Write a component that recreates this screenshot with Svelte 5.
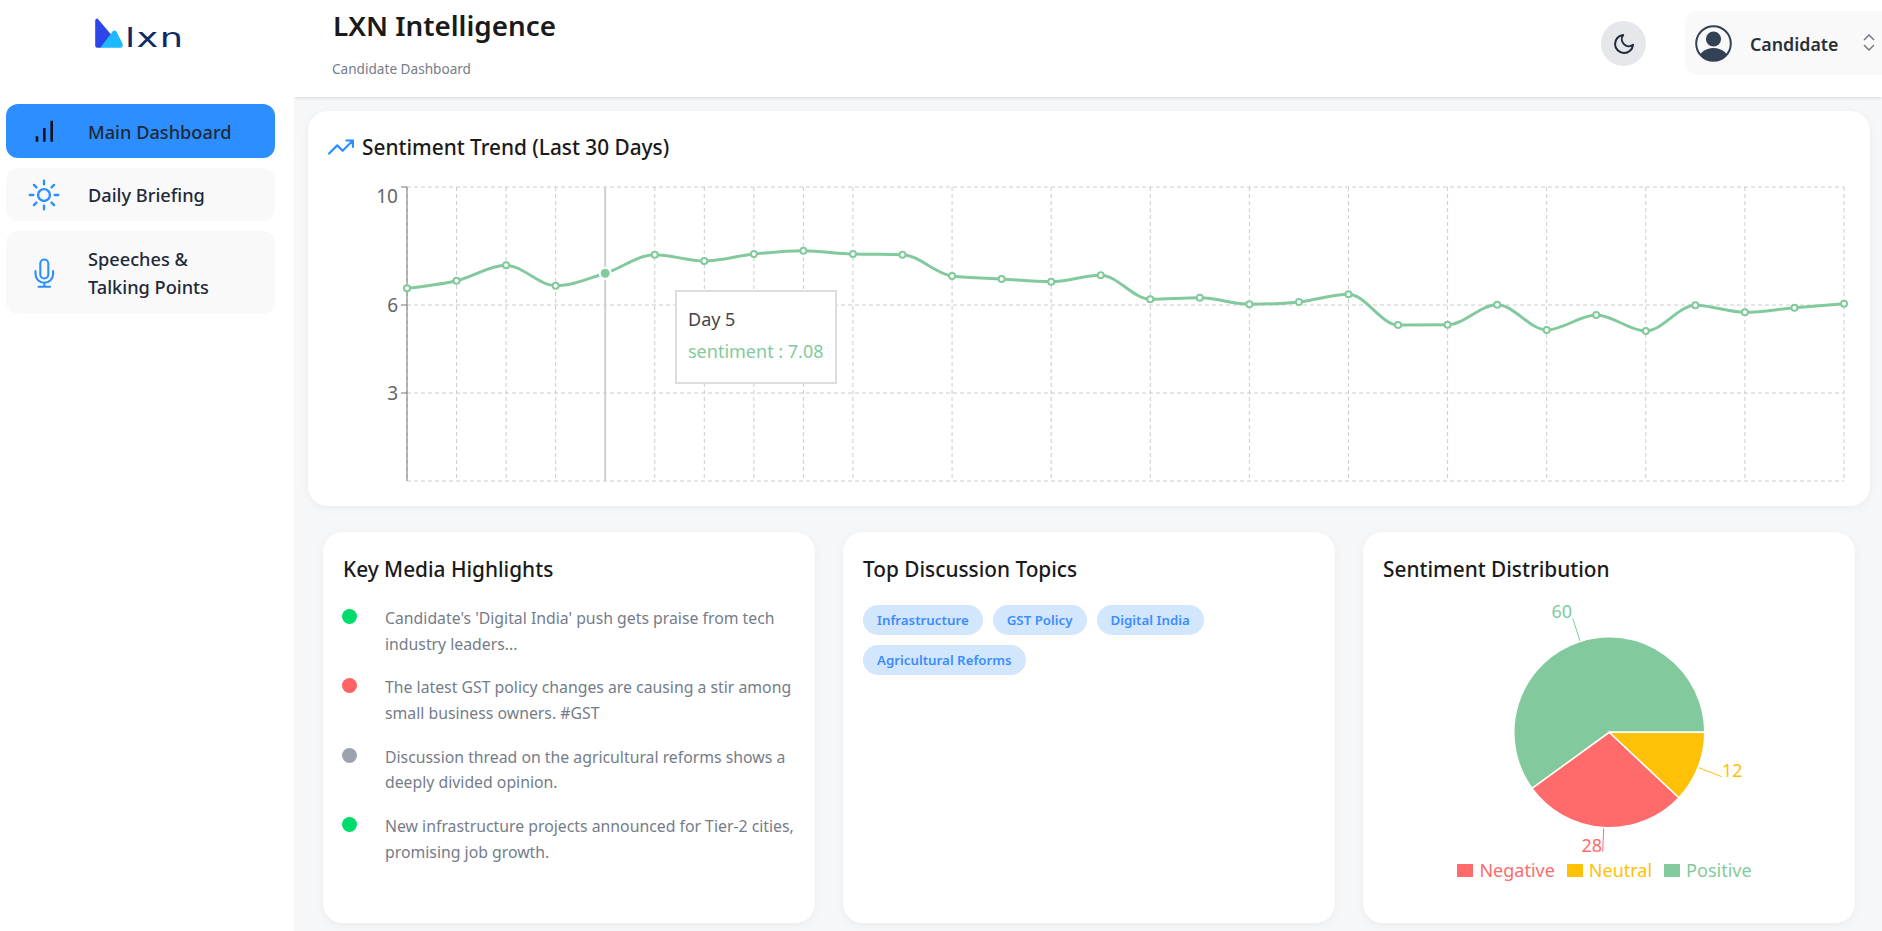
<script>
  const nav = [
    { id: 'dash', label: 'Main Dashboard', active: true },
    { id: 'sun', label: 'Daily Briefing' },
    { id: 'mic', label: 'Speeches & Talking Points' }
  ];
  const highlights = [
    { tone: 'pos', text: "Candidate's 'Digital India' push gets praise from tech industry leaders..." },
    { tone: 'neg', text: 'The latest GST policy changes are causing a stir among small business owners. #GST' },
    { tone: 'neu', text: 'Discussion thread on the agricultural reforms shows a deeply divided opinion.' },
    { tone: 'pos', text: 'New infrastructure projects announced for Tier-2 cities, promising job growth.' }
  ];
  const topics = ['Infrastructure', 'GST Policy', 'Digital India', 'Agricultural Reforms'];
  const legend = [
    { label: 'Negative', color: '#ff6b6b' },
    { label: 'Neutral', color: '#ffc107' },
    { label: 'Positive', color: '#82ca9d' }
  ];

  // chart geometry, local to the svg
  const L = 79, R = 1516, T = 7, B = 301;
  const pxY = [288.3,280.7,265.3,285.7,273.3,254.7,261,254,250.7,254,254.7,276,279,281.7,275.3,299.3,297.7,304.3,302,294.3,325,324.7,304.7,330,315,331,305.3,312.3,307.7,303.7];
  const pts = pxY.map((y, i) => [L + (i * (R - L)) / 29, y - 180]);
  const hover = 4;

  function slope3(x0, y0, x1, y1, x2, y2) {
    const h0 = x1 - x0, h1 = x2 - x1;
    const s0 = (y1 - y0) / h0, s1 = (y2 - y1) / h1;
    const p = (s0 * h1 + s1 * h0) / (h0 + h1);
    return (Math.sign(s0) + Math.sign(s1)) * Math.min(Math.abs(s0), Math.abs(s1), 0.5 * Math.abs(p)) || 0;
  }
  function monotone(p) {
    const n = p.length;
    const t = p.map((q, i) => {
      if (i === 0 || i === n - 1) return null;
      return slope3(p[i - 1][0], p[i - 1][1], q[0], q[1], p[i + 1][0], p[i + 1][1]);
    });
    const h0 = p[1][0] - p[0][0];
    t[0] = (3 * (p[1][1] - p[0][1]) / h0 - t[1]) / 2;
    const hn = p[n - 1][0] - p[n - 2][0];
    t[n - 1] = (3 * (p[n - 1][1] - p[n - 2][1]) / hn - t[n - 2]) / 2;
    let d = `M${p[0][0]},${p[0][1]}`;
    for (let i = 0; i < n - 1; i++) {
      const dx = (p[i + 1][0] - p[i][0]) / 3;
      d += `C${p[i][0] + dx},${p[i][1] + dx * t[i]} ${p[i + 1][0] - dx},${p[i + 1][1] - dx * t[i + 1]} ${p[i + 1][0]},${p[i + 1][1]}`;
    }
    return d;
  }
  const linePath = monotone(pts);
  const vLines = pts.map((q, i) => ({ x: q[0], i })).filter((v) => v.i <= 9 || v.i % 2 === 1).map((v) => v.x);
  const hLines = [7, 125, 213, 301];
  const ticks = [
    { y: 7, label: '10', ty: 23 },
    { y: 125, label: '6', ty: 132 },
    { y: 213, label: '3', ty: 220 }
  ];

  // pie geometry, local to the svg
  const cx = 226.3, cy = 142.3, r = 95.5;
  const pol = (deg, rad = r) => [cx + rad * Math.cos((deg * Math.PI) / 180), cy - rad * Math.sin((deg * Math.PI) / 180)];
  function sector(a0, a1) {
    const [x0, y0] = pol(a0);
    const [x1, y1] = pol(a1);
    const large = a1 - a0 > 180 ? 1 : 0;
    return `M${cx},${cy}L${x0},${y0}A${r},${r} 0 ${large} 0 ${x1},${y1}Z`;
  }
  const slices = [
    { d: sector(0, 216), color: '#82ca9d' },
    { d: sector(216, 316.8), color: '#ff6b6b' },
    { d: sector(316.8, 360), color: '#ffc107' }
  ];
</script>

<div class="shell">
  <aside class="side">
    <div class="logo">
      <svg width="30" height="32" viewBox="0 0 30 32" aria-hidden="true">
        <path d="M0.2 3C0.2 .8 2 -.2 3.4 1.4L19 20L6 29.7H2.2C1 29.7 .2 28.9 .2 27.7Z" fill="#2d46e8" />
        <path d="M5.2 29.7L17.6 13.6C18.8 12.2 20.6 12.2 21.6 13.8L27.4 25.4C28.4 27.8 27.4 29.7 25 29.7Z" fill="#1eb8ff" />
      </svg>
      <span class="word">lxn</span>
    </div>
    <nav class="nav">
      {#each nav as item}
        <div class="nav-item" class:active={item.active}>
          <span class="nav-icon">
            {#if item.id === 'dash'}
              <svg width="38" height="38" viewBox="0 0 38 38" fill="none" stroke="#0b1220" stroke-width="2.6" aria-hidden="true">
                <path d="M12 29.7V24.3M19.3 29.7V16M26.7 29.7V8.7" />
              </svg>
            {:else if item.id === 'sun'}
              <svg width="38" height="38" viewBox="0 0 24 24" fill="none" stroke="#2d8fff" stroke-width="1.5" stroke-linecap="round" aria-hidden="true">
                <path d="M12 3v2.25m6.364.386-1.591 1.591M21 12h-2.25m-.386 6.364-1.591-1.591M12 18.75V21m-4.773-4.227-1.591 1.591M5.25 12H3m4.227-4.773L5.636 5.636M15.75 12a3.75 3.75 0 1 1-7.5 0 3.75 3.75 0 0 1 7.5 0Z" />
              </svg>
            {:else}
              <svg width="24" height="32" viewBox="0 0 24 32" fill="none" stroke="#2d8fff" stroke-width="2.1" stroke-linecap="round" aria-hidden="true">
                <rect x="8.3" y="2.5" width="8" height="19" rx="4" />
                <path d="M3.5 14v3a8.8 8.8 0 0 0 17.6 0v-3M12.3 26v3.7M6.5 29.7h11.6" />
              </svg>
            {/if}
          </span>
          <span class="nav-label">{item.label}</span>
        </div>
      {/each}
    </nav>
  </aside>

  <div class="main">
    <header class="top">
      <div class="titles">
        <h1>LXN Intelligence</h1>
        <p>Candidate Dashboard</p>
      </div>
      <div class="top-right">
        <button class="theme" aria-label="Toggle theme">
          <svg width="24" height="24" viewBox="0 0 24 24" fill="none" stroke="#1f2937" stroke-width="2" stroke-linecap="round" stroke-linejoin="round" aria-hidden="true">
            <path d="M21 12.79A9 9 0 1 1 11.21 3 7 7 0 0 0 21 12.79z" />
          </svg>
        </button>
        <div class="user">
          <svg width="37" height="37" viewBox="0 0 37 37" aria-hidden="true">
            <defs><clipPath id="av"><circle cx="18.5" cy="18.5" r="17.5" /></clipPath></defs>
            <circle cx="18.5" cy="18.5" r="17.3" fill="none" stroke="#334155" stroke-width="2" />
            <circle cx="18.5" cy="14" r="7.6" fill="#334155" />
            <ellipse cx="18.5" cy="36" rx="15.5" ry="13" fill="#334155" clip-path="url(#av)" />
          </svg>
          <span class="user-name">Candidate</span>
          <svg class="chev" width="12" height="18" viewBox="0 0 12 18" fill="none" stroke="#6b7280" stroke-width="1.4" aria-hidden="true">
            <path d="M1 6l5-5 5 5M1 11l5 5 5-5" />
          </svg>
        </div>
      </div>
    </header>

    <main class="content">
      <section class="card trend">
        <div class="trend-head">
          <svg width="26" height="26" viewBox="0 0 24 24" fill="none" stroke="#2d8fff" stroke-width="2" stroke-linecap="round" stroke-linejoin="round" aria-hidden="true">
            <path d="M23 6l-9.5 9.5-5-5L1 18M17 6h6v6" />
          </svg>
          <h2>Sentiment Trend (Last 30 Days)</h2>
        </div>
        <div class="chart">
          <svg width="1522" height="306" viewBox="0 0 1522 306" aria-hidden="true">
            <g stroke="#ccc" stroke-dasharray="4 3" fill="none">
              {#each hLines as y}<line x1={L} x2={R} y1={y} y2={y} />{/each}
              {#each vLines as x}<line x1={x} x2={x} y1={T} y2={B} />{/each}
            </g>
            <line x1={L} x2={L} y1={T} y2={B} stroke="#777" />
            {#each ticks as t}
              <line x1={L - 6} x2={L} y1={t.y} y2={t.y} stroke="#777" />
              <text x={L - 9} y={t.ty} text-anchor="end" class="tick">{t.label}</text>
            {/each}
            <line x1={pts[hover][0]} x2={pts[hover][0]} y1={T} y2={B} stroke="#d0d0d0" stroke-width="2" />
            <path d={linePath} fill="none" stroke="#82ca9d" stroke-width="3" />
            {#each pts as p, i}
              {#if i === hover}
                <circle cx={p[0]} cy={p[1]} r="5.5" fill="#82ca9d" stroke="#fff" stroke-width="2" />
              {:else}
                <circle cx={p[0]} cy={p[1]} r="3" fill="#fff" stroke="#82ca9d" stroke-width="2" />
              {/if}
            {/each}
          </svg>
          <div class="tip">
            <div class="tip-label">Day 5</div>
            <div class="tip-value">sentiment : 7.08</div>
          </div>
        </div>
      </section>

      <div class="row">
        <section class="card panel">
          <h3>Key Media Highlights</h3>
          <ul class="list">
            {#each highlights as h}
              <li>
                <span class="dot {h.tone}"></span>
                <span class="li-text">{h.text}</span>
              </li>
            {/each}
          </ul>
        </section>

        <section class="card panel">
          <h3>Top Discussion Topics</h3>
          <div class="chips">
            {#each topics as t}<span class="chip">{t}</span>{/each}
          </div>
        </section>

        <section class="card panel">
          <h3>Sentiment Distribution</h3>
          <svg class="pie" width="452" height="268" viewBox="0 0 452 268" aria-hidden="true">
            {#each slices as s}
              <path d={s.d} fill={s.color} stroke="#fff" stroke-width="1.5" />
            {/each}
            <path d="M197 51L189.7 28.3" stroke="#82ca9d" fill="none" />
            <path d="M316 177.7L338.7 186.7" stroke="#ffc107" fill="none" />
            <path d="M220.7 238.3L219.7 261.7" stroke="#ff6b6b" fill="none" />
            <text x="189" y="28" text-anchor="end" fill="#82ca9d" class="plabel">60</text>
            <text x="339" y="187" fill="#ffc107" class="plabel">12</text>
            <text x="219" y="262" text-anchor="end" fill="#ff6b6b" class="plabel">28</text>
          </svg>
          <div class="legend">
            {#each legend as l}
              <span class="leg" style:color={l.color}>
                <span class="swatch" style:background={l.color}></span>{l.label}
              </span>
            {/each}
          </div>
        </section>
      </div>
    </main>
  </div>
</div>

<style>
  :global(body) {
    margin: 0;
    background: #f6f7f9;
    font-family: "Noto Sans", "Open Sans", sans-serif;
    overflow: hidden;
  }
  .shell {
    display: grid;
    grid-template-columns: 294px 1fr;
    height: 931px;
    overflow: hidden;
  }
  .side {
    background: #fff;
    padding: 18px 19px 0 6px;
  }
  .logo {
    display: flex;
    align-items: flex-start;
    gap: 0;
    height: 86px;
    padding-left: 89px;
  }
  .word {
    font-family: "DejaVu Sans", sans-serif;
    font-size: 27px;
    line-height: 39px;
    color: #0e2a66;
    letter-spacing: 1px;
    transform: scaleX(1.36);
    transform-origin: left center;
  }
  .nav {
    display: flex;
    flex-direction: column;
    gap: 10px;
  }
  .nav-item {
    display: flex;
    align-items: center;
    gap: 25px;
    min-height: 53px;
    padding-left: 19px;
    border-radius: 12px;
    background: #f9f9fa;
    box-sizing: border-box;
  }
  .nav-item.active {
    background: #2d8fff;
    min-height: 54px;
  }
  .nav-item:last-child {
    min-height: 83px;
  }
  .nav-icon {
    width: 38px;
    display: flex;
    justify-content: center;
    flex: none;
  }
  .nav-label {
    width: 140px;
    padding-top: 1px;
    font-size: 18.2px;
    font-weight: 500;
    line-height: 28px;
    color: #1f2937;
  }
  .nav-item.active .nav-label {
    white-space: nowrap;
  }
  .main {
    display: flex;
    flex-direction: column;
    min-width: 0;
  }
  .top {
    height: 97px;
    background: #fff;
    box-shadow: 0 1px 4px rgba(0, 0, 0, 0.12);
    clip-path: inset(0 0 -10px 0);
    display: flex;
    justify-content: space-between;
    padding-left: 39px;
    flex: none;
    position: relative;
  }
  h1 {
    margin: 3px 0 0;
    font-size: 27.8px;
    line-height: 44px;
    font-weight: 600;
    color: #1a1a1a;
  }
  .titles p {
    margin: 13px 0 0 -1px;
    font-size: 13.6px;
    line-height: 18px;
    color: #757c89;
  }
  .top-right {
    display: flex;
    align-items: flex-start;
    gap: 39px;
  }
  .theme {
    width: 45px;
    height: 45px;
    margin-top: 21px;
    border: none;
    border-radius: 50%;
    background: #e5e7eb;
    display: flex;
    align-items: center;
    justify-content: center;
    padding: 0;
  }
  .user {
    width: 197px;
    height: 64px;
    margin-top: 11px;
    border-radius: 12px 0 0 12px;
    background: #f9f9fa;
    display: flex;
    align-items: center;
    padding-left: 10px;
    box-sizing: border-box;
  }
  .user-name {
    margin-left: 18px;
    width: 113px;
    padding-top: 1px;
    font-size: 17.8px;
    font-weight: 600;
    color: #2b2f36;
  }
  .content {
    padding: 14px 12px 0 14px;
  }
  .card {
    background: #fff;
    border-radius: 20px;
    box-shadow: 0 2px 10px rgba(0, 0, 0, 0.05);
  }
  .trend {
    padding: 20px;
    height: 395px;
    box-sizing: border-box;
  }
  .trend-head {
    display: flex;
    align-items: center;
    gap: 8px;
    height: 32px;
    margin-bottom: 17px;
  }
  h2, h3 {
    margin: 0;
    font-size: 20.8px;
    font-weight: 500;
    color: #1a1a1a;
  }
  .chart {
    position: relative;
  }
  .chart svg {
    display: block;
  }
  .tick {
    font-size: 19px;
    fill: #666;
  }
  .tip {
    position: absolute;
    left: 347px;
    top: 110px;
    width: 162px;
    height: 94px;
    box-sizing: border-box;
    background: #fff;
    border: 2px solid #ddd;
    padding: 13px 11px;
    font-size: 18px;
    white-space: nowrap;
  }
  .tip-label {
    color: #444;
    line-height: 28px;
    margin-bottom: 4px;
  }
  .tip-value {
    color: #82ca9d;
    line-height: 28px;
  }
  .row {
    display: grid;
    grid-template-columns: repeat(3, 492px);
    gap: 28px;
    margin: 26px 0 0 15px;
  }
  .panel {
    height: 391px;
    padding: 20px;
    box-sizing: border-box;
  }
  h3 {
    line-height: 34px;
  }
  .list {
    list-style: none;
    margin: 20px 0 0;
    padding: 0;
  }
  .list li {
    display: flex;
    gap: 28px;
    margin-bottom: 18.2px;
    font-size: 15.8px;
    line-height: 25.6px;
    color: #757c89;
  }
  .dot {
    flex: none;
    width: 15px;
    height: 15px;
    border-radius: 50%;
    margin: 3px 0 0 -1px;
  }
  .dot.pos { background: #00dc6c; }
  .dot.neg { background: #ff6367; }
  .dot.neu { background: #9ca3af; }
  .chips {
    display: flex;
    flex-wrap: wrap;
    gap: 10px;
    margin-top: 19px;
  }
  .chip {
    height: 30px;
    line-height: 30px;
    padding: 0 14px;
    border-radius: 15px;
    background: #d2e6fd;
    color: #3b8dff;
    font-size: 13.3px;
    font-weight: 600;
  }
  .pie {
    display: block;
    margin-top: 4px;
  }
  .plabel {
    font-size: 18px;
  }
  .legend {
    display: flex;
    justify-content: center;
    gap: 12px;
    padding-right: 9px;
    font-size: 18px;
    line-height: 24px;
  }
  .leg {
    display: flex;
    align-items: center;
    gap: 6px;
  }
  .swatch {
    width: 16px;
    height: 13px;
  }
</style>
